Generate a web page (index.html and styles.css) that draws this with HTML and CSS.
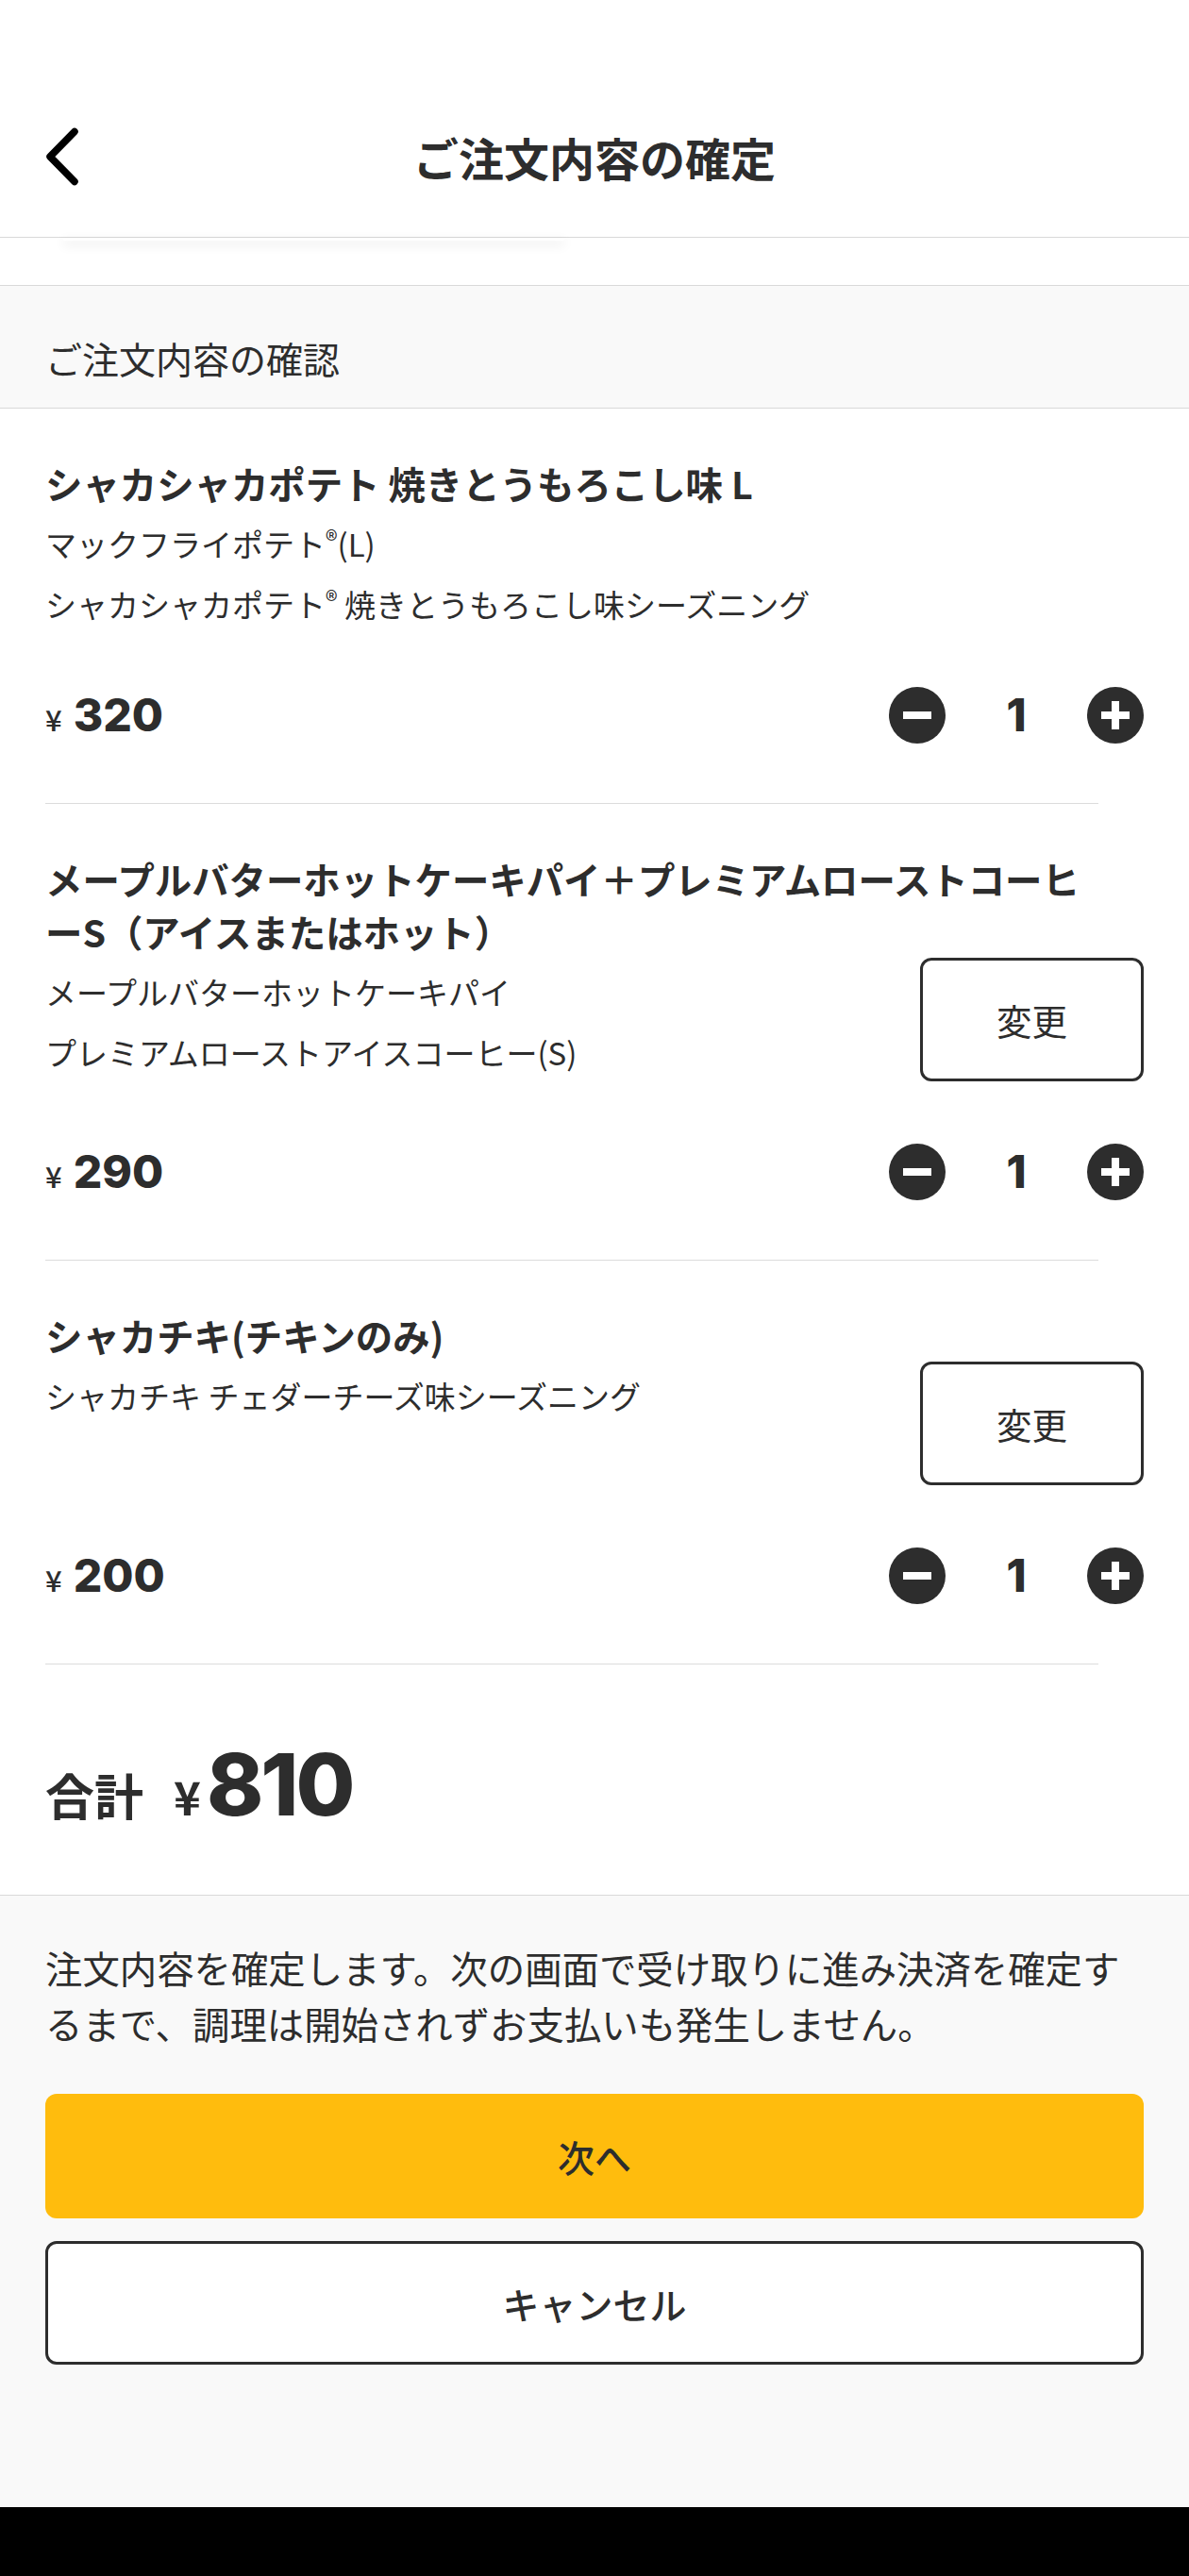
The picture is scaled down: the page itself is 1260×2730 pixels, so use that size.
FILE: index.html
```html
<!DOCTYPE html>
<html lang="ja">
<head>
    <meta charset="UTF-8">
    <meta name="viewport" content="width=device-width, initial-scale=1.0">
    <title>ご注文内容の確定</title>
    <link rel="stylesheet" href="styles.css">
</head>
<body>
    <div class="screen">
        <header class="app-header">
            <button class="back-button" aria-label="戻る">
                <svg width="36" height="62" viewBox="0 0 36 62">
                    <path d="M31 4.5 L5 31 L31 57.5" fill="none" stroke="#000" stroke-width="7.5" stroke-linecap="round" stroke-linejoin="round"/>
                </svg>
            </button>
            <h1 class="page-title">ご注文内容の確定</h1>
        </header>

        <div class="peek-area">
            <div class="peek-card"></div>
        </div>

        <div class="section-header">ご注文内容の確認</div>

        <ul class="order-list">
            <li class="order-item">
                <h2 class="item-name">シャカシャカポテト 焼きとうもろこし味 L</h2>
                <div class="item-body">
                    <div class="item-options">
                        <p>マックフライポテト<span class="reg">®</span>(L)</p>
                        <p>シャカシャカポテト<span class="reg">®</span> 焼きとうもろこし味シーズニング</p>
                    </div>
                </div>
                <div class="item-footer">
                    <div class="price"><span class="yen">¥</span><span class="amount">320</span></div>
                    <div class="stepper">
                        <button class="step-button" aria-label="減らす">
                            <svg width="60" height="60" viewBox="0 0 60 60"><circle cx="30" cy="30" r="30" fill="#2d2d2d"/><rect x="15" y="26" width="30" height="8" fill="#fff"/></svg>
                        </button>
                        <span class="quantity">1</span>
                        <button class="step-button" aria-label="増やす">
                            <svg width="60" height="60" viewBox="0 0 60 60"><circle cx="30" cy="30" r="30" fill="#2d2d2d"/><rect x="15" y="26" width="30" height="8" fill="#fff"/><rect x="26" y="15" width="8" height="30" fill="#fff"/></svg>
                        </button>
                    </div>
                </div>
            </li>

            <li class="order-item">
                <h2 class="item-name">メープルバターホットケーキパイ＋プレミアムローストコーヒーS（アイスまたはホット）</h2>
                <div class="item-body">
                    <div class="item-options">
                        <p>メープルバターホットケーキパイ</p>
                        <p>プレミアムローストアイスコーヒー(S)</p>
                    </div>
                    <button class="change-button">変更</button>
                </div>
                <div class="item-footer">
                    <div class="price"><span class="yen">¥</span><span class="amount">290</span></div>
                    <div class="stepper">
                        <button class="step-button" aria-label="減らす">
                            <svg width="60" height="60" viewBox="0 0 60 60"><circle cx="30" cy="30" r="30" fill="#2d2d2d"/><rect x="15" y="26" width="30" height="8" fill="#fff"/></svg>
                        </button>
                        <span class="quantity">1</span>
                        <button class="step-button" aria-label="増やす">
                            <svg width="60" height="60" viewBox="0 0 60 60"><circle cx="30" cy="30" r="30" fill="#2d2d2d"/><rect x="15" y="26" width="30" height="8" fill="#fff"/><rect x="26" y="15" width="8" height="30" fill="#fff"/></svg>
                        </button>
                    </div>
                </div>
            </li>

            <li class="order-item">
                <h2 class="item-name">シャカチキ(チキンのみ)</h2>
                <div class="item-body">
                    <div class="item-options">
                        <p>シャカチキ チェダーチーズ味シーズニング</p>
                    </div>
                    <button class="change-button">変更</button>
                </div>
                <div class="item-footer">
                    <div class="price"><span class="yen">¥</span><span class="amount">200</span></div>
                    <div class="stepper">
                        <button class="step-button" aria-label="減らす">
                            <svg width="60" height="60" viewBox="0 0 60 60"><circle cx="30" cy="30" r="30" fill="#2d2d2d"/><rect x="15" y="26" width="30" height="8" fill="#fff"/></svg>
                        </button>
                        <span class="quantity">1</span>
                        <button class="step-button" aria-label="増やす">
                            <svg width="60" height="60" viewBox="0 0 60 60"><circle cx="30" cy="30" r="30" fill="#2d2d2d"/><rect x="15" y="26" width="30" height="8" fill="#fff"/><rect x="26" y="15" width="8" height="30" fill="#fff"/></svg>
                        </button>
                    </div>
                </div>
            </li>
        </ul>

        <div class="order-total">
            <span class="total-label">合計</span>
            <span class="total-yen">¥</span>
            <span class="total-amount">810</span>
        </div>

        <div class="checkout">
            <p class="notice">注文内容を確定します。次の画面で受け取りに進み決済を確定するまで、調理は開始されずお支払いも発生しません。</p>
            <button class="primary-button">次へ</button>
            <button class="secondary-button">キャンセル</button>
        </div>

        <div class="nav-bar"></div>
    </div>
</body>
</html>
```

FILE: styles.css
```css
body {
    margin: 0;
    background: #fff;
    color: #2d2d2d;
    font-family: "Noto Sans CJK JP", "Noto Sans", sans-serif;
}

button {
    font-family: inherit;
    color: inherit;
    cursor: pointer;
}

.screen {
    width: 1260px;
    min-height: 2730px;
    display: flex;
    flex-direction: column;
}

/* header */
.app-header {
    box-sizing: border-box;
    height: 252px;
    padding-top: 100px;
    border-bottom: 1px solid #d9d9d9;
    display: grid;
    grid-template-columns: 1fr auto 1fr;
    grid-template-rows: 132px;
    align-items: center;
}

.back-button {
    justify-self: start;
    margin-left: 48px;
    padding: 0;
    border: none;
    background: none;
    width: 36px;
    height: 62px;
}

.back-button svg {
    display: block;
}

.page-title {
    margin: 0;
    font-size: 48px;
    font-weight: 700;
    line-height: 60px;
}

.peek-area {
    height: 50px;
    border-bottom: 1px solid #d9d9d9;
}

.peek-card {
    margin-left: 66px;
    width: 533px;
    height: 3px;
    background: #fff;
    border-radius: 0 0 10px 10px;
    box-shadow: 0 4px 12px rgba(0, 0, 0, 0.14);
}

.section-header {
    background: #f9f9f9;
    padding: 51px 48px 28px;
    font-size: 39px;
    line-height: 50px;
    border-bottom: 1px solid #d9d9d9;
}

/* items */
.order-list {
    list-style: none;
    margin: 0;
    padding: 0;
}

.order-item {
    padding: 51px 48px 0;
}

.order-item::after {
    content: "";
    display: block;
    height: 1px;
    background: #dcdcdc;
    margin: 63px 48px 0 0;
}

.item-name {
    margin: 0 48px 0 0;
    font-size: 39.4px;
    font-weight: 700;
    line-height: 56px;
}

.item-body {
    display: flex;
    justify-content: space-between;
    align-items: flex-start;
}

.item-options {
    padding-top: 14px;
    display: flex;
    flex-direction: column;
    gap: 20px;
}

.item-options p {
    margin: 0;
    font-size: 33px;
    line-height: 44px;
}

.reg {
    font-size: 0.8em;
    vertical-align: 0.3em;
    line-height: 0;
}

.change-button {
    flex-shrink: 0;
    box-sizing: border-box;
    width: 237px;
    height: 131px;
    border: 3px solid #2d2d2d;
    border-radius: 12px;
    background: #fff;
    font-size: 37.5px;
}

.item-footer {
    margin-top: 66px;
    height: 60px;
    display: flex;
    justify-content: space-between;
    align-items: center;
}

.price {
    display: flex;
    align-items: baseline;
}

.yen {
    font-size: 31px;
    font-weight: 500;
    margin-right: 12px;
}

.amount,
.quantity,
.total-amount {
    font-family: Inter, "Liberation Sans", sans-serif;
    font-weight: 800;
}

.amount {
    font-size: 48px;
    line-height: 60px;
}

.stepper {
    display: flex;
    align-items: center;
}

.step-button {
    width: 60px;
    height: 60px;
    padding: 0;
    border: none;
    background: none;
}

.step-button svg {
    display: block;
}

.quantity {
    width: 150px;
    text-align: center;
    font-size: 48px;
    line-height: 60px;
}

/* total */
.order-total {
    padding: 77px 48px 67px;
    display: flex;
    align-items: baseline;
}

.total-label {
    font-size: 52px;
    font-weight: 700;
    line-height: 60px;
}

.total-yen {
    margin-left: 32px;
    margin-right: 6px;
    font-size: 49px;
    font-weight: 700;
    line-height: 60px;
}

.total-amount {
    font-size: 91px;
    line-height: 100px;
    letter-spacing: -3px;
}

/* checkout */
.checkout {
    flex: 1;
    background: #f9f9f9;
    border-top: 1px solid #d9d9d9;
    padding: 46px 48px 150px;
}

.notice {
    margin: 0;
    font-size: 39.4px;
    line-height: 59px;
}

.primary-button,
.secondary-button {
    display: block;
    box-sizing: border-box;
    width: 100%;
    font-size: 39px;
    font-weight: 500;
    border-radius: 12px;
}

.primary-button {
    margin-top: 46px;
    height: 132px;
    border: none;
    background: #ffbc0d;
}

.secondary-button {
    margin-top: 24px;
    height: 131px;
    border: 3px solid #2d2d2d;
    background: #fff;
}

.nav-bar {
    height: 73px;
    background: #000;
}
```
